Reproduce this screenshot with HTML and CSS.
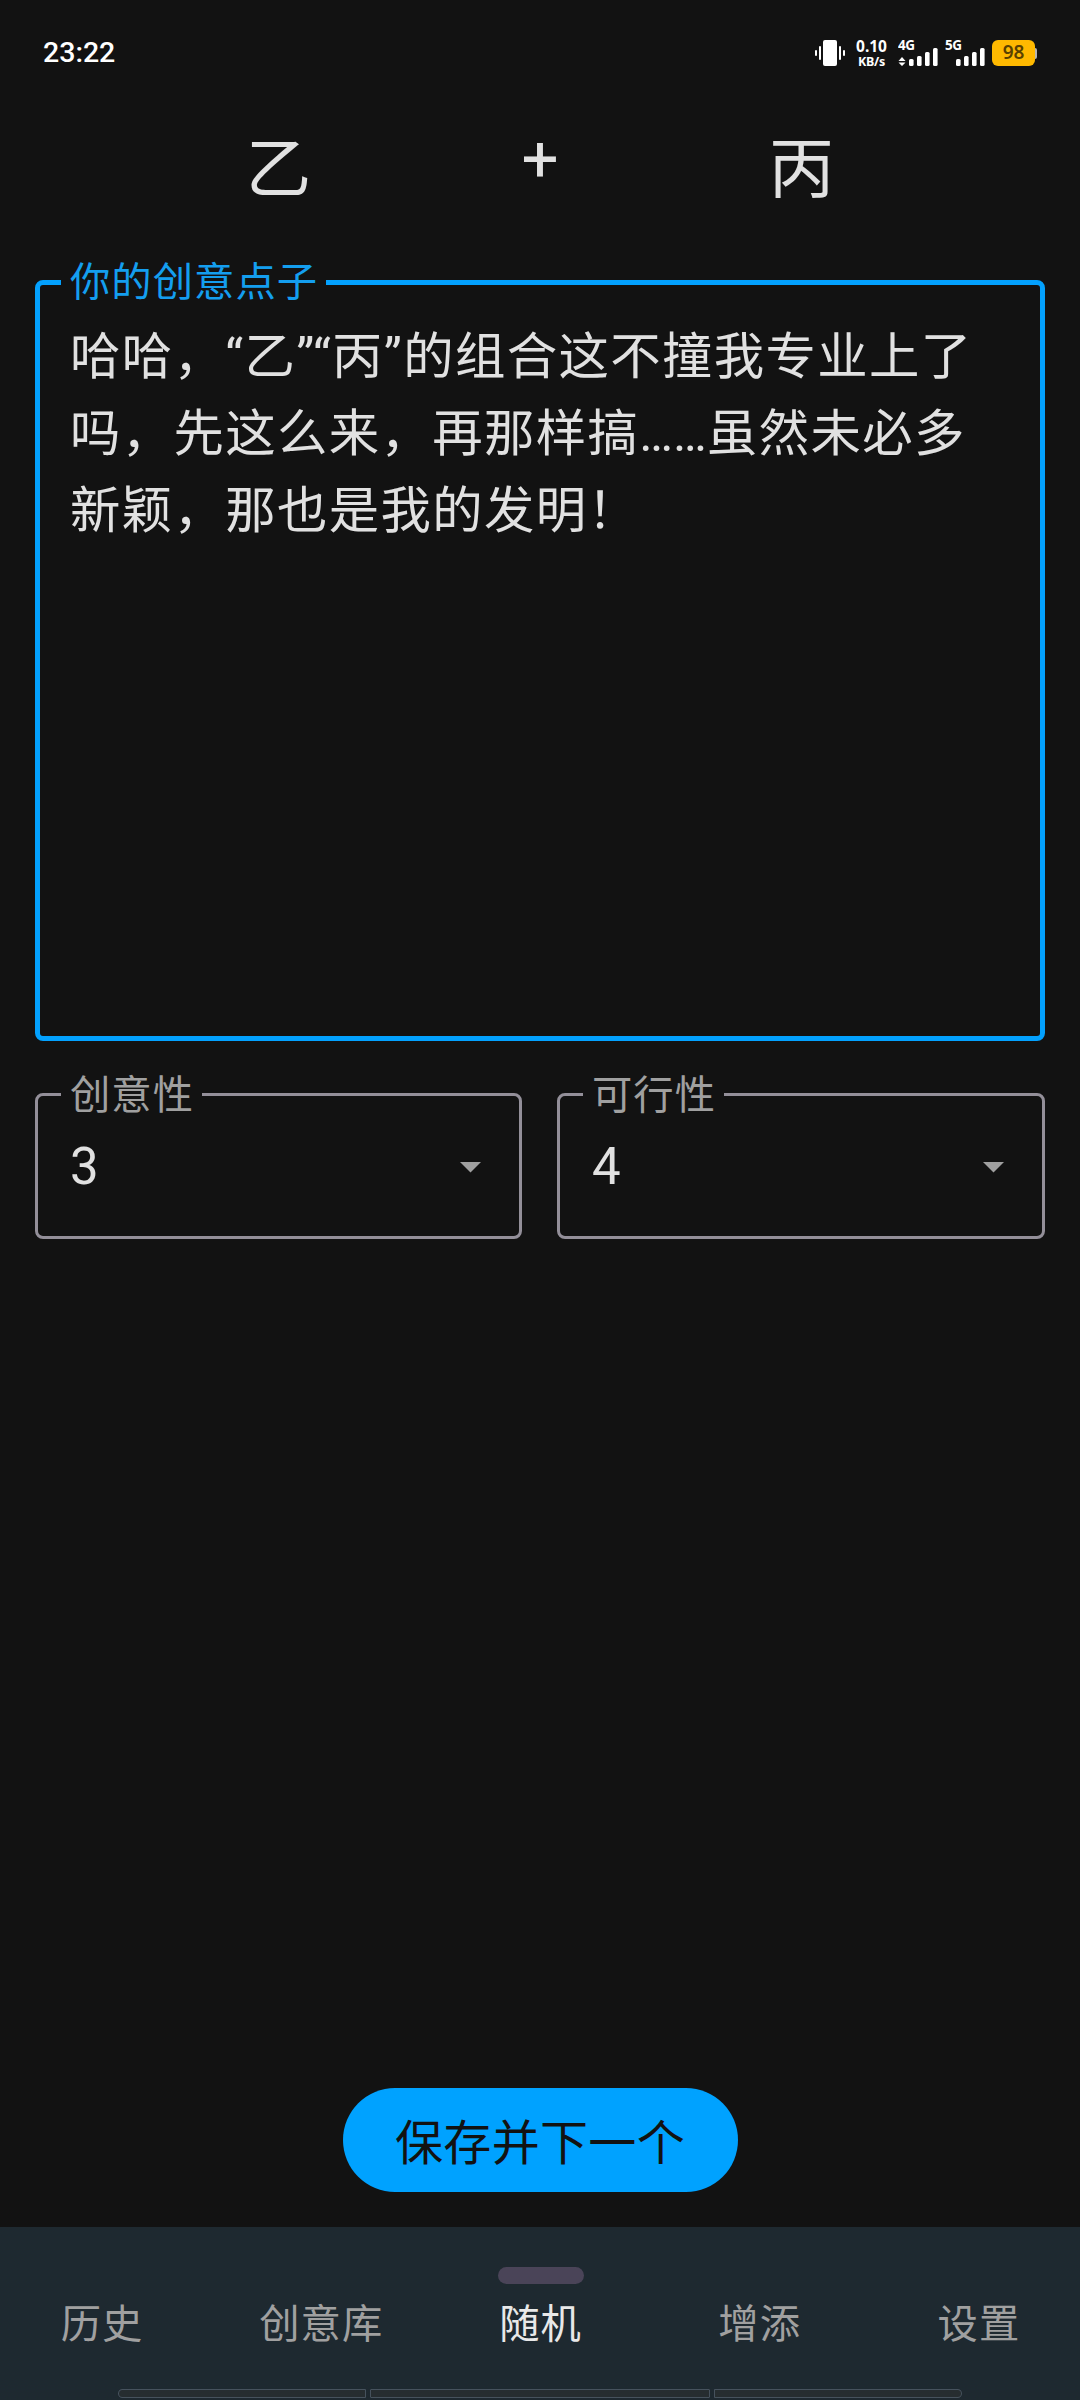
FILE: index.html
```html
<!DOCTYPE html>
<html lang="zh-CN">
<head>
<meta charset="utf-8">
<title>随机</title>
<link rel="stylesheet" href="styles.css">
</head>
<body>
<header class="status">
  <span class="clock">23:22</span>
  <div class="status-icons">
    <svg class="vibrate" width="30" height="26" viewBox="0 0 30 26">
      <rect x="8" y="0" width="14" height="26" rx="2"/>
      <rect x="0" y="10" width="2" height="6" rx="1"/>
      <rect x="4" y="6" width="2" height="14" rx="1"/>
      <rect x="24" y="6" width="2" height="14" rx="1"/>
      <rect x="28" y="10" width="2" height="6" rx="1"/>
    </svg>
    <div class="speed"><span class="rate">0.10</span><span class="unit">KB/s</span></div>
    <svg class="signal" width="40" height="42" viewBox="0 -8 40 42">
      <text x="0" y="10">4G</text>
      <path d="M0.5 21 4 17 7.500 21ZM0.500 22.500H7.500L4 26Z"/>
      <rect x="11" y="19" width="4.600" height="7" rx="1.500"/>
      <rect x="19" y="16" width="4.600" height="10" rx="1.500"/>
      <rect x="27" y="12" width="4.600" height="14" rx="1.500"/>
      <rect x="35" y="8" width="4.600" height="18" rx="1.500"/>
    </svg>
    <svg class="signal signal-5g" width="40" height="42" viewBox="0 -8 40 42">
      <text x="0" y="10">5G</text>
      <rect x="11" y="19" width="4.600" height="7" rx="1.500"/>
      <rect x="19" y="16" width="4.600" height="10" rx="1.500"/>
      <rect x="27" y="12" width="4.600" height="14" rx="1.500"/>
      <rect x="35" y="8" width="4.600" height="18" rx="1.500"/>
    </svg>
    <div class="battery"><span class="level">98</span><span class="cap"></span></div>
  </div>
</header>

<main class="content">
  <div class="pair">
    <span>乙</span>
    <span class="plus">+</span>
    <span>丙</span>
  </div>

  <fieldset class="field idea">
    <legend>你的创意点子</legend>
    <p>哈哈，“乙”“丙”的组合这不撞我专业上了</p>
    <p>吗，先这么来，再那样搞<span class="dots">……</span>虽然未必多</p>
    <p>新颖，那也是我的发明！</p>
  </fieldset>

  <div class="ratings">
    <fieldset class="field rating">
      <legend>创意性</legend>
      <div class="value"><span>3</span><svg width="21" height="11" viewBox="0 0 21 11"><path d="M0 0H21L10.500 10.500Z"/></svg></div>
    </fieldset>
    <fieldset class="field rating">
      <legend>可行性</legend>
      <div class="value"><span>4</span><svg width="21" height="11" viewBox="0 0 21 11"><path d="M0 0H21L10.500 10.500Z"/></svg></div>
    </fieldset>
  </div>

  <button class="save">保存并下一个</button>
</main>

<nav class="tabs">
  <div class="tab-row">
    <a class="tab">历史</a>
    <a class="tab">创意库</a>
    <a class="tab active">随机</a>
    <a class="tab">增添</a>
    <a class="tab">设置</a>
  </div>
  <div class="gesture"><i></i><i></i><i></i></div>
</nav>
</body>
</html>
```
FILE: styles.css
```css
* { box-sizing: border-box; }

body {
  margin: 0;
  width: 1080px;
  height: 2400px;
  display: flex;
  flex-direction: column;
  background: #121212;
  color: #e1e1e1;
  font-family: Roboto, "Noto Sans CJK SC", sans-serif;
  overflow: hidden;
}

.status {
  height: 106px;
  padding: 0 43px;
  display: flex;
  justify-content: space-between;
  align-items: center;
  color: #fff;
}
.clock { font-size: 28.500px; font-weight: 500; line-height: 34px; }
.status-icons { display: flex; align-items: center; }
.status-icons svg { fill: #fff; display: block; }
.speed {
  width: 31px;
  height: 31px;
  margin-left: 11px;
  display: flex;
  flex-direction: column;
  align-items: center;
  font-family: "Noto Sans", sans-serif;
  font-weight: 700;
}
.rate { font-size: 15.500px; line-height: 17px; }
.unit { font-size: 12.500px; line-height: 14px; letter-spacing: -0.300px; }
.signal { margin-left: 11px; }
.signal-5g { margin-left: 7px; }
.signal text { font: 700 13.500px "Noto Sans", sans-serif; letter-spacing: -0.500px; }
.battery { margin-left: 7px; display: flex; align-items: center; }
.level {
  width: 43px;
  height: 26px;
  border-radius: 6px;
  background: #ffb900;
  color: #5a4100;
  font: 600 19px/25px "Noto Sans", sans-serif;
  text-align: center;
}
.cap { width: 2px; height: 11px; border-radius: 0 2px 2px 0; background: #b5b5b5; }

.content {
  flex: 1;
  padding: 0 35px 35px;
  display: flex;
  flex-direction: column;
}
.pair {
  height: 156px;
  display: grid;
  grid-template-columns: repeat(3, 261.500px);
  justify-content: center;
  text-align: center;
  font-size: 65.500px;
  line-height: 128px;
}
.plus { line-height: 106px; }

.field { margin: 0; min-width: 0; border-style: solid; border-radius: 8px; }
.field legend {
  padding: 1px 8px 0 9px;
  font-size: 40.300px;
  line-height: 40px;
  letter-spacing: 1.050px;
}
.idea {
  height: 779px;
  border: 5px solid #03a1fe;
  padding: 15px 21px 0;
}
.idea legend { color: #149eef; }
.idea p {
  margin: 0 0 0 9px;
  font-size: 50.400px;
  line-height: 77px;
  letter-spacing: 1.360px;
  white-space: nowrap;
}
.dots { letter-spacing: 0.100px; }

.ratings { display: grid; grid-template-columns: 487px 488px; gap: 35px; margin-top: 33px; }
.rating { height: 165px; border: 3px solid #938f99; padding: 0 23px; }
.rating legend { padding-top: 2px; line-height: 39px; color: #a0a0a0; }
.value {
  height: 104px;
  padding: 0 15px 0 9px;
  display: flex;
  align-items: center;
  justify-content: space-between;
  font-size: 51px;
}
.value span { padding-bottom: 2px; }
.value svg { fill: #a0a0a0; display: block; }

.save {
  width: 395px;
  height: 104px;
  margin: auto auto 0;
  padding: 8px 0 0;
  border: 0;
  border-radius: 52px;
  background: #00a2ff;
  color: #121212;
  font: 400 48px/96px Roboto, "Noto Sans CJK SC", sans-serif;
  letter-spacing: 0.350px;
}

.tabs { height: 173px; background: #1e2930; display: flex; flex-direction: column; justify-content: space-between; }
.tab-row { display: grid; grid-template-columns: repeat(5, 1fr); gap: 17px; padding: 40px 0 0 1px; }
.tab {
  display: flex;
  flex-direction: column;
  align-items: center;
  color: #a0a0a0;
  font-size: 40.300px;
  line-height: 48px;
  letter-spacing: 1.050px;
}
.tab::before { content: ""; width: 86px; height: 17px; border-radius: 9px; margin: 0 0 17px 1px; }
.tab.active { color: #e8e8e8; }
.tab.active::before { background: #4a4458; }

.gesture {
  width: 844px;
  height: 9px;
  margin: 0 auto 2px 118px;
  display: grid;
  grid-template-columns: 248px 340px 248px;
  gap: 4px;
}
.gesture i { border: 1px solid #46525d; background: #262d30; border-radius: 1px; }
.gesture i:first-child { border-radius: 5px 1px 1px 5px; }
.gesture i:last-child { border-radius: 1px 5px 5px 1px; }
```
